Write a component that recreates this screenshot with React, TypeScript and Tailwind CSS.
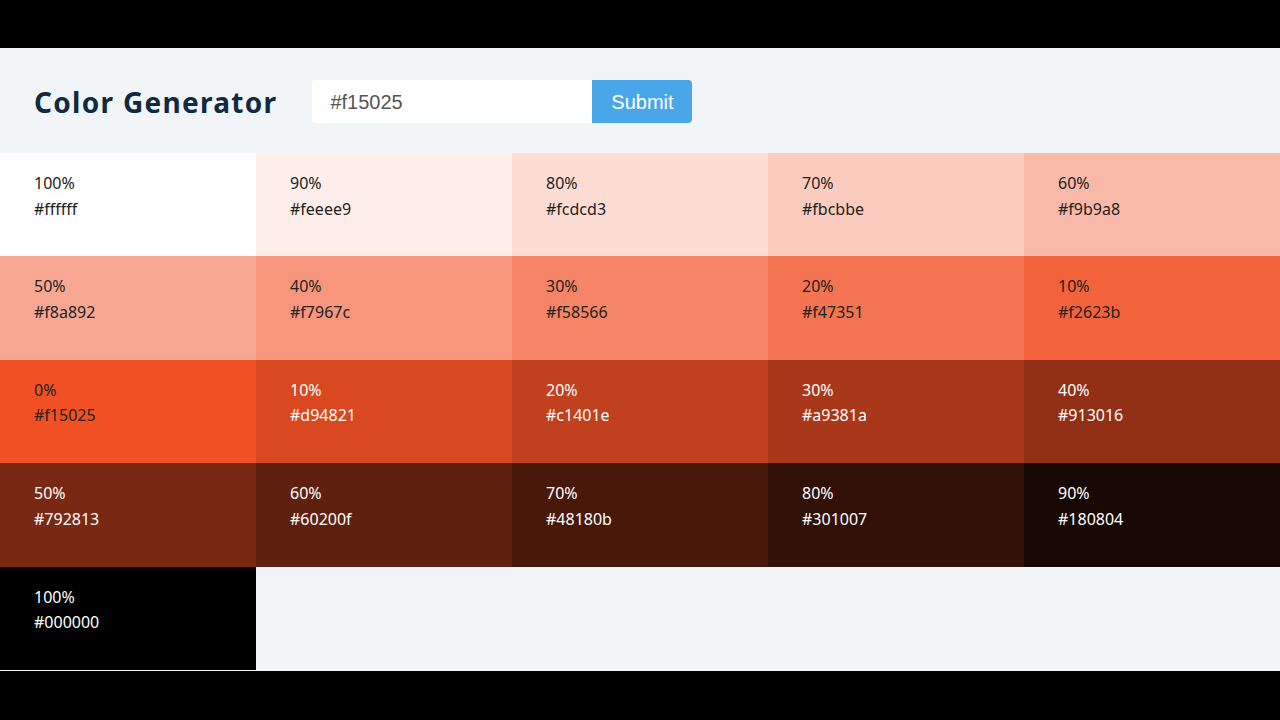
import React from "react";

const colors = [
  ["100%", "#ffffff"], ["90%", "#feeee9"], ["80%", "#fcdcd3"], ["70%", "#fbcbbe"], ["60%", "#f9b9a8"],
  ["50%", "#f8a892"], ["40%", "#f7967c"], ["30%", "#f58566"], ["20%", "#f47351"], ["10%", "#f2623b"],
  ["0%", "#f15025"], ["10%", "#d94821"], ["20%", "#c1401e"], ["30%", "#a9381a"], ["40%", "#913016"],
  ["50%", "#792813"], ["60%", "#60200f"], ["70%", "#48180b"], ["80%", "#301007"], ["90%", "#180804"],
  ["100%", "#000000"],
];

export default function App() {
  return (
    <div className="w-[1280px] h-[720px] bg-black flex flex-col overflow-hidden" style={{ fontFamily: '"Noto Sans", sans-serif' }}>
      <div className="h-[48px] shrink-0 bg-black" />
      <div className="h-[623px] shrink-0 bg-[#f1f5f8] flex flex-col">
        <header className="h-[105px] shrink-0 flex items-center pl-[34px] pt-[2px]">
          <h1 className="text-[28px] font-bold tracking-[1.3px] text-[#102a42] leading-none mr-[35px]" style={{ fontFamily: '"Noto Sans", sans-serif' }}>
            Color Generator
          </h1>
          <div className="flex h-[43px]" style={{ fontFamily: '"Liberation Sans", Arial, sans-serif' }}>
            <div className="w-[280px] bg-white rounded-l-[4px] flex items-center pl-[18px] text-[20px] text-[#555]">#f15025</div>
            <div className="w-[100px] bg-[#49a6e9] rounded-r-[4px] flex items-center justify-center text-[20px] text-white">Submit</div>
          </div>
        </header>
        <div className="grid grid-cols-5">
          {colors.map(([p, hex], i) => (
            <div
              key={i}
              className={`h-[103.4px] pl-[34px] pt-[18px] text-[16px] leading-[25.5px] ${i > 10 ? "text-white" : "text-[#222]"}`}
              style={{ backgroundColor: hex }}
            >
              <p>{p}</p>
              <p>{hex}</p>
            </div>
          ))}
        </div>
      </div>
    </div>
  );
}
